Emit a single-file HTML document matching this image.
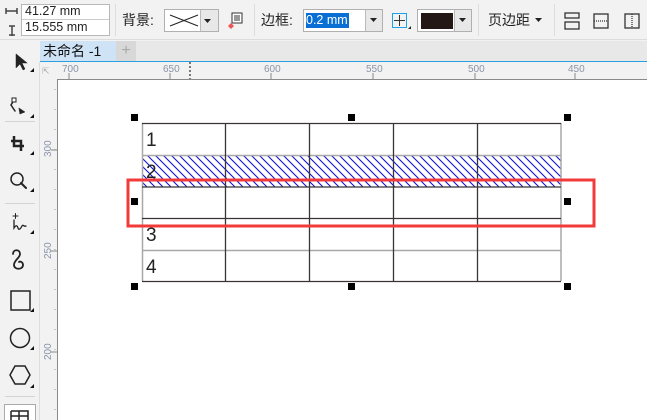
<!DOCTYPE html>
<html><head><meta charset="utf-8"><style>
*{margin:0;padding:0;box-sizing:border-box}
body{width:647px;height:420px;overflow:hidden;background:#f2f2f2;font-family:"Liberation Sans","Noto Sans CJK SC",sans-serif;position:relative}
.a{position:absolute}
.t{font-size:14px;color:#222}
</style></head><body>
<div class="a" style="left:0;top:0;width:647px;height:40px;background:#f2f2f2;border-bottom:1px solid #dcdcdc"></div>
<div class="a" style="left:21px;top:4px;width:89px;height:32px;background:#fff;border:1px solid #b8b8b8"></div>
<div class="a" style="left:22px;top:19px;width:87px;height:1px;background:#ccc"></div>
<div class="a t" style="left:25px;top:4px;font-size:12.5px">41.27 mm</div>
<div class="a t" style="left:25px;top:20px;font-size:12.5px">15.555 mm</div>
<svg class="a" style="left:5px;top:4px" width="14" height="32"><path d="M1 7h11M1 4v6M12 4v6" stroke="#444" stroke-width="1.5" fill="none"/><path d="M7 22v10M4 22h6M4 31h6" stroke="#444" stroke-width="1.5"/></svg>
<div class="a" style="left:115px;top:4px;width:1px;height:32px;background:#ddd"></div>
<div class="a t" style="left:122px;top:10px">背景:</div>
<div class="a" style="left:164px;top:9px;width:55px;height:23px;background:#fff;border:1px solid #b0b0b0"></div>
<div class="a" style="left:200px;top:10px;width:18px;height:21px;background:#e8e8e8;border-left:1px solid #bbb"></div>
<svg class="a" style="left:165px;top:10px" width="54" height="22"><path d="M5 5L33 16M5 16L33 5" stroke="#222"/><path d="M39 9h7l-3.5 4z" fill="#222"/></svg>
<svg class="a" style="left:228px;top:11px" width="16" height="18"><rect x="4" y="2" width="10" height="10" fill="#fff" stroke="#333"/><path d="M6 5h6M6 7h6M6 9h6" stroke="#333"/><path d="M3 12l3 3-3 3-3-3z" fill="#e55"/></svg>
<div class="a" style="left:254px;top:4px;width:1px;height:32px;background:#ddd"></div>
<div class="a t" style="left:261px;top:10px">边框:</div>
<div class="a" style="left:303px;top:9px;width:80px;height:23px;background:#fff;border:1px solid #b0b0b0"></div>
<div class="a" style="left:306px;top:13px;width:43px;height:15px;background:#0a6fd4;color:#fff;font-size:12.5px;line-height:15px">0.2 mm</div>
<div class="a" style="left:365px;top:10px;width:17px;height:21px;background:#e8e8e8;border-left:1px solid #bbb"></div>
<svg class="a" style="left:369px;top:17px" width="10" height="6"><path d="M1 1h7l-3.5 4z" fill="#222"/></svg>
<svg class="a" style="left:391px;top:12px" width="20" height="20"><rect x="1.5" y="1.5" width="14" height="14" fill="none" stroke="#1aa3e8"/><path d="M8.5 3v11M3 8.5h11" stroke="#333"/><path d="M17 17h3v-3z" fill="#222"/></svg>
<div class="a" style="left:417px;top:9px;width:55px;height:23px;background:#fff;border:1px solid #b0b0b0"></div>
<div class="a" style="left:421px;top:13px;width:32px;height:16px;background:#231815"></div>
<div class="a" style="left:454px;top:10px;width:17px;height:21px;background:#e8e8e8;border-left:1px solid #bbb"></div>
<svg class="a" style="left:458px;top:17px" width="10" height="6"><path d="M1 1h7l-3.5 4z" fill="#222"/></svg>
<div class="a" style="left:478px;top:4px;width:1px;height:32px;background:#ddd"></div>
<div class="a t" style="left:488px;top:10px">页边距</div>
<svg class="a" style="left:534px;top:17px" width="10" height="6"><path d="M1 1h7l-3.5 4z" fill="#222"/></svg>
<div class="a" style="left:554px;top:4px;width:1px;height:32px;background:#ddd"></div>
<svg class="a" style="left:564px;top:12px" width="83" height="18"><g fill="none" stroke="#333" stroke-width="1.3"><rect x="1" y="1" width="14" height="5"/><rect x="1" y="10" width="14" height="7"/><rect x="30" y="2" width="14" height="14"/><path d="M30 9h14" stroke-dasharray="1 1"/><rect x="61" y="2" width="14" height="14"/><path d="M68 2v14" stroke-dasharray="1 1"/></g></svg>
<div class="a" style="left:40px;top:41px;width:607px;height:20px;background:#e8e8e8"></div>
<div class="a" style="left:40px;top:41px;width:76px;height:20px;background:#cfe3f7;font-size:14px;line-height:20px;padding-left:3px;color:#111">未命名 -1</div>
<div class="a" style="left:116px;top:41px;width:20px;height:20px;background:#d8d8d8;color:#aaa;font-size:16px;line-height:19px;text-align:center">+</div>
<div class="a" style="left:40px;top:61px;width:607px;height:1px;background:#2aa0e0"></div>
<svg class="a" style="left:40px;top:62px" width="607" height="17">
<rect width="607" height="17" fill="#f2f2f2"/>
<g fill="#8a94a8" font-size="10" font-family="Liberation Sans">
<text x="22" y="10">700</text><text x="123" y="10">650</text><text x="224" y="10">600</text><text x="326" y="10">550</text><text x="428" y="10">500</text><text x="528" y="10">450</text></g>
<g stroke="#888"><path d="M29 11v6M130 11v6M231 11v6M333 11v6M435 11v6M535 11v6"/></g>
<path d="M150 0v17" stroke="#000" stroke-dasharray="2 2"/>
<text x="2" y="12" font-size="9" fill="#aaa">⇱</text>
</svg>
<div class="a" style="left:0;top:62px;width:40px;height:358px;background:#f2f2f2"></div>
<div class="a" style="left:39px;top:62px;width:1px;height:358px;background:#ddd"></div>
<svg class="a" style="left:0;top:48px" width="40" height="372">
<g fill="#222" stroke="#222" stroke-width="2" stroke-linecap="round">
<path d="M16 6v14l4-4 3 6 2-1-3-6h5z" stroke-width="0.5"/>
<path d="M14 52l-3 5 4 6" fill="none" stroke-width="1.5"/><rect x="12" y="50" width="4" height="4" fill="#fff" stroke-width="1"/><path d="M19 60l6 4-5 2z" stroke-width="0.5"/>
<path d="M14 88v10h10M11 93h10v10" fill="none" stroke-width="2.5" stroke-linecap="butt"/>
<circle cx="17" cy="131" r="6" fill="none" stroke-width="1.5"/><path d="M21 135l5 5" stroke-width="2"/>
<path d="M13 168h5M15.5 165.5v5" stroke-width="1"/><path d="M14 172v8c2-3 3-3 4 0s3 0 4-2 2 1 4 0" fill="none" stroke-width="1.3"/>
<path d="M13 206c0-5 7-5 7 0 0 4-6 6-6 11 0 5 9 5 9 0 0-3-3-4-4-3" fill="none" stroke-width="1.8"/>
<rect x="11" y="243" width="19" height="19" fill="none" stroke-width="1.5"/>
<circle cx="20" cy="290" r="9.5" fill="none" stroke-width="1.5"/>
<path d="M15 318h10l5 9-5 9H15l-5-9z" fill="none" stroke-width="1.5"/>
</g>
<g fill="#111"><path d="M34 24v-4l-4 4z"/><path d="M34 70v-4l-4 4z"/><path d="M34 107v-4l-4 4z"/><path d="M34 144v-4l-4 4z"/><path d="M34 186v-4l-4 4z"/><path d="M34 264v-4l-4 4z"/><path d="M34 302v-4l-4 4z"/><path d="M34 340v-4l-4 4z"/></g>
<path d="M5 73.5h30M5 155.5h30M5 348.5h30" stroke="#d4d4d4"/>
<rect x="4.5" y="356.5" width="31" height="20" fill="#fff" stroke="#aaa"/>
<path d="M11 363h17v10M11 363v10M11 368h17M19 363v10" fill="none" stroke="#222" stroke-width="1.5"/>
</svg>
<svg class="a" style="left:40px;top:79px" width="17" height="341">
<rect width="17" height="341" fill="#f2f2f2"/>
<g fill="#8a94a8" font-size="10" font-family="Liberation Sans">
<text transform="translate(11,78) rotate(-90)">300</text>
<text transform="translate(11,180) rotate(-90)">250</text>
<text transform="translate(11,281) rotate(-90)">200</text></g>
<g stroke="#888"><path d="M11 71h6M11 172h6M11 273h6"/></g>
<g stroke="#999" stroke-dasharray="1 19"><path d="M15 10v331"/></g>
</svg>
<svg class="a" style="left:57px;top:79px" width="590" height="341">
<defs><pattern id="h" width="8" height="8" patternUnits="userSpaceOnUse"><path d="M-2 -2L10 10M-10 -2L2 10M6 -2L18 10" stroke="#1010d8" stroke-width="1.1"/></pattern></defs>
<rect width="590" height="341" fill="#fff"/>
<path d="M0.5 341V0.5H590" stroke="#8a8a8a" fill="none"/>
<g transform="translate(-57,-79)">
<rect x="142" y="155" width="419" height="32" fill="url(#h)"/>
<g stroke="#a8a8a8" stroke-width="1.5"><path d="M142 155.5h419M142 250.5h419M142.5 123v158M561 123v158"/></g>
<g stroke="#3a3434" stroke-width="1.3"><path d="M142 123.5h419M142 187h419M142 218.5h419M142 281.5h419M225.5 123v158M309.5 123v158M393.5 123v158M477.5 123v158"/></g>
<g font-size="19" fill="#222" font-family="Liberation Sans"><text x="146" y="146">1</text><text x="146" y="178">2</text><text x="146" y="241">3</text><text x="146" y="273">4</text></g>
<rect x="128" y="180" width="466" height="46" fill="none" stroke="#f23a3a" stroke-width="3"/>
<g fill="#000"><rect x="131" y="114" width="7" height="7"/><rect x="348" y="114" width="7" height="7"/><rect x="564" y="114" width="7" height="7"/><rect x="131" y="198" width="7" height="7"/><rect x="564" y="198" width="7" height="7"/><rect x="131" y="283" width="7" height="7"/><rect x="348" y="283" width="7" height="7"/><rect x="564" y="283" width="7" height="7"/></g>
</g>
</svg>
</body></html>
